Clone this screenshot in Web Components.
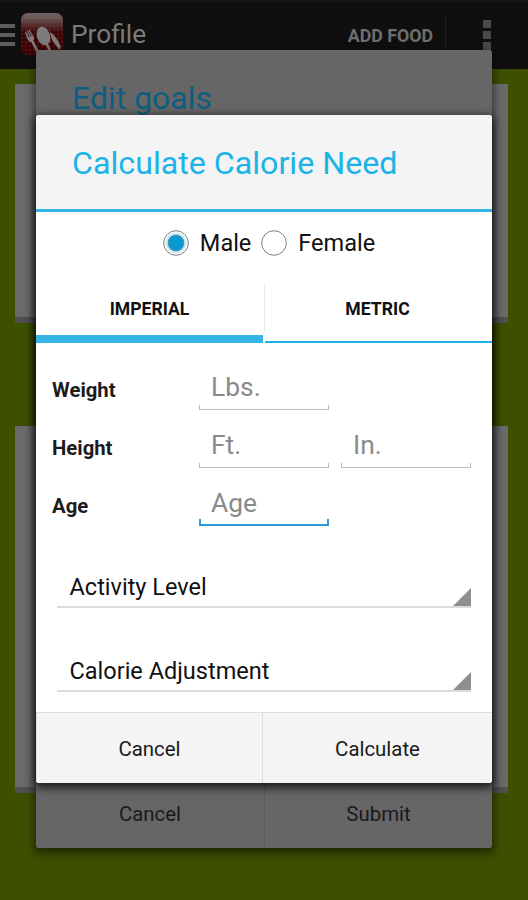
<!DOCTYPE html>
<html><head><meta charset="utf-8">
<style>
html,body{margin:0;padding:0;background:#3c5000}
body{width:528px;height:900px;overflow:hidden;font-family:Roboto,"Liberation Sans",sans-serif}
app-screen{display:block}
</style></head><body>
<app-screen>
  <app-bar slot="bar" title="Profile" action="ADD FOOD"></app-bar>
  <bg-panel style="height:233px;margin-top:15px"></bg-panel>
  <bg-panel style="height:361px;margin-top:103px"></bg-panel>
  <modal-dialog slot="dialogs" heading="Edit goals" top="50" height="798" dim split="228">
    <dialog-btn slot="buttons">Cancel</dialog-btn>
    <dialog-btn slot="buttons">Submit</dialog-btn>
  </modal-dialog>
  <modal-dialog slot="dialogs" heading="Calculate Calorie Need" top="115" height="668" split="226">
    <radio-row>
      <radio-opt checked>Male</radio-opt>
      <radio-opt>Female</radio-opt>
    </radio-row>
    <unit-tabs></unit-tabs>
    <field-row label="Weight"><text-field hint="Lbs."></text-field></field-row>
    <field-row label="Height"><text-field hint="Ft."></text-field><text-field hint="In."></text-field></field-row>
    <field-row label="Age"><text-field hint="Age" focused></text-field></field-row>
    <spinner-field style="margin-top:17px">Activity Level</spinner-field>
    <spinner-field style="margin-top:35px">Calorie Adjustment</spinner-field>
    <dialog-btn slot="buttons">Cancel</dialog-btn>
    <dialog-btn slot="buttons">Calculate</dialog-btn>
  </modal-dialog>
</app-screen>
<script>
function def(name, css, html, init){
  customElements.define(name, class extends HTMLElement{
    connectedCallback(){
      if(this.shadowRoot) return;
      const r=this.attachShadow({mode:'open'});
      r.innerHTML='<style>'+css+'</style>'+(typeof html==='function'?html(this):html);
      if(init) init(this,r);
    }
  });
}
def('app-screen',`:host{display:block;position:relative;width:528px;height:900px;overflow:hidden;background:#3c5000}`,
`<slot name="bar"></slot><slot></slot><slot name="dialogs"></slot>`);
def('app-bar',`:host{display:flex;align-items:center;height:69px;background:#0f0f0f;border-top:1px solid #161616;box-sizing:border-box;color:#6e6e6e}
.burger{width:15px;height:22px;display:flex;flex-direction:column;justify-content:space-between}
.burger i{display:block;height:4.4px;background:#5c5c5c}
svg.logo{margin-left:6px;margin-top:-2px;width:42px;height:42px;flex:none}
.t{font-size:26.3px;margin-left:8px;margin-top:-2px;color:#7b7b7b;flex:1}
.a{font-size:17.8px;font-weight:700;color:#6e6e6e;margin-top:1px}
.d{width:1px;height:34px;background:#222;margin:-3px 37px 0 12px}
.o{display:flex;flex-direction:column;gap:3px;margin:-1px 37px 0 0}
.o i{display:block;width:8px;height:8px;background:#4a4a4a}`,
h=>`<div class="burger"><i></i><i></i><i></i></div>
<svg class="logo" viewBox="0 0 42 42"><defs><pattern id="c" width="4" height="4" patternUnits="userSpaceOnUse"><rect width="4" height="4" fill="#3d0808"/><rect width="2" height="2" fill="#5e0c0c"/><rect x="2" y="2" width="2" height="2" fill="#2a0606"/></pattern><linearGradient id="g" x1="0" y1="0" x2="0" y2="1"><stop offset="0" stop-color="#6f6060"/><stop offset=".12" stop-color="#6f5c5c" stop-opacity=".95"/><stop offset=".48" stop-color="#6b4a4a" stop-opacity="0"/></linearGradient></defs>
<rect width="42" height="42" rx="7" fill="url(#c)"/><rect width="42" height="42" rx="7" fill="url(#g)"/>
<g fill="#7c7c7c"><path d="M4 19.5l1-.7 3.4 5.6.7-.4-3.4-5.7 1-.6 3.4 5.6.7-.4-3.4-5.7 1-.6 4.2 7c.9 1.6.6 2.9-.3 3.8l6.6 12.5-2.4 1.3-6.4-12.4c-1.2.1-2.4-.5-3.2-1.9z"/>
<ellipse cx="22.5" cy="23" rx="6.6" ry="9.5" transform="rotate(-20 22.5 23)"/><path d="M24.5 31l2.2-1 5.3 11-2.6 1z"/>
<path d="M29 19c4 2.5 8.5 8.5 10.5 14 .7 2-.2 3-1.6 3.4L31 27z"/></g></svg>
<div class="t">${h.getAttribute('title')}</div><div class="a">${h.getAttribute('action')}</div><div class="d"></div><div class="o"><i></i><i></i><i></i></div>`);
def('bg-panel',`:host{display:block;margin-left:15px;width:493px;background:#6a6a6a;border-bottom:6px solid #4f4f4f}`,``);
def('modal-dialog',`:host{position:absolute;left:36px;width:456px;display:flex;flex-direction:column;border-radius:3px;overflow:hidden;background:#fff;box-shadow:0 3px 8px 2px rgba(0,0,0,.7)}
:host([dim]){background:#666;box-shadow:0 3px 8px 2px rgba(0,0,0,.5)}
header{box-sizing:border-box;padding:2px 0 0 36px;display:flex;align-items:center;background:#f4f4f4;color:#1cb3e8;font-size:32.2px;flex:none;border-bottom:3px solid #33b5e5;height:97px}
:host([dim]) header{background:#666;color:#0e5e80;border:0;align-items:flex-start;padding-top:29px;font-size:32px}
.body{flex:1;display:flex;flex-direction:column;min-height:0}
footer{display:grid;height:71px;flex:none;background:#f4f4f4;border-top:1px solid #dedede;box-sizing:border-box}
:host([dim]) footer{background:#666;border-top:0;height:64px}`,
h=>`<header>${h.getAttribute('heading')}</header><div class="body"><slot></slot></div><footer style="grid-template-columns:${h.getAttribute('split')}px 1fr"><slot name="buttons"></slot></footer>`,
h=>{h.style.top=h.getAttribute('top')+'px';h.style.height=h.getAttribute('height')+'px';});
def('dialog-btn',`:host{display:flex;align-items:center;justify-content:center;font-size:20.4px;color:#1a1a1a;box-sizing:border-box;padding-top:2px}
:host(:not(:first-child)){border-left:1px solid #dedede}
:host-context([dim]){padding-top:0;padding-bottom:4px}
:host-context([dim]):host(:not(:first-child)){border-left-color:#5c5c5c}`,`<slot></slot>`);
def('radio-row',`:host{display:flex;justify-content:center;align-items:center;gap:10px;height:62px;margin-bottom:11px;flex:none;padding-left:10px}`,`<slot></slot>`);
def('radio-opt',`:host{display:flex;align-items:center;gap:11px;font-size:23.5px;color:#111}
svg{width:26px;height:26px;flex:none}`,
h=>`<svg viewBox="0 0 26 26"><circle cx="13" cy="13" r="12.3" fill="#fff" stroke="#7d7d7d" stroke-width="1"/>${h.hasAttribute('checked')?'<circle cx="13" cy="13" r="10.5" fill="#cfe8f3"/><circle cx="13" cy="13" r="8" fill="#0b98cf" stroke="#5a8fa6" stroke-width=".7"/>':''}</svg><span><slot></slot></span>`);
def('unit-tabs',`:host{display:grid;grid-template-columns:227px 1fr;height:58px;flex:none;margin-bottom:25px}
.t{display:flex;align-items:center;justify-content:center;font-size:17.6px;font-weight:700;color:#111;box-sizing:border-box}
.a{border-bottom:8px solid #33b5e5;padding-bottom:2px;position:relative}
.b{border-bottom:2px solid #1cb3e8;margin-left:2px;padding-bottom:8px;padding-right:2px}
.a::after{content:"";position:absolute;right:-2px;top:0;bottom:3px;width:1px;background:#e8e8e8}`,
`<div class="t a">IMPERIAL</div><div class="t b">METRIC</div>`);
def('field-row',`:host{display:flex;height:58px;padding-left:16px;box-sizing:border-box;flex:none}
.l{width:147px;font-size:20.3px;font-weight:700;color:#1c1c1c;flex:none;padding-top:10px;box-sizing:border-box}
.f{display:flex;gap:12px}`,
h=>`<div class="l">${h.getAttribute('label')}</div><div class="f"><slot></slot></div>`);
def('text-field',`:host{display:block;width:130px;height:42px;box-sizing:border-box;position:relative;font-size:26.4px;color:#8a8a8a;padding-left:12px;line-height:39px;--c:#bdbdbd;border-bottom:1.5px solid var(--c)}
:host([focused]){--c:#2a9ad6;border-bottom-width:2px}
.n{position:absolute;bottom:0;width:1px;height:4px;background:var(--c)}
:host([focused]) .n{width:2px;height:5px}`,
h=>`<div class="n" style="left:0"></div><div class="n" style="right:0"></div>${h.getAttribute('hint')}`);
def('spinner-field',`:host{display:flex;align-items:flex-end;height:49px;margin:0 21px 0 21px;box-sizing:border-box;border-bottom:2px solid #dcdcdc;position:relative;font-size:23.5px;color:#111;padding:0 0 5px 12.5px;flex:none}
svg{position:absolute;right:0;bottom:0;width:18px;height:18px}`,
`<slot></slot><svg viewBox="0 0 18 18"><path d="M18 0V18H0z" fill="#8f8f8f"/></svg>`);
</script>
</body></html>
